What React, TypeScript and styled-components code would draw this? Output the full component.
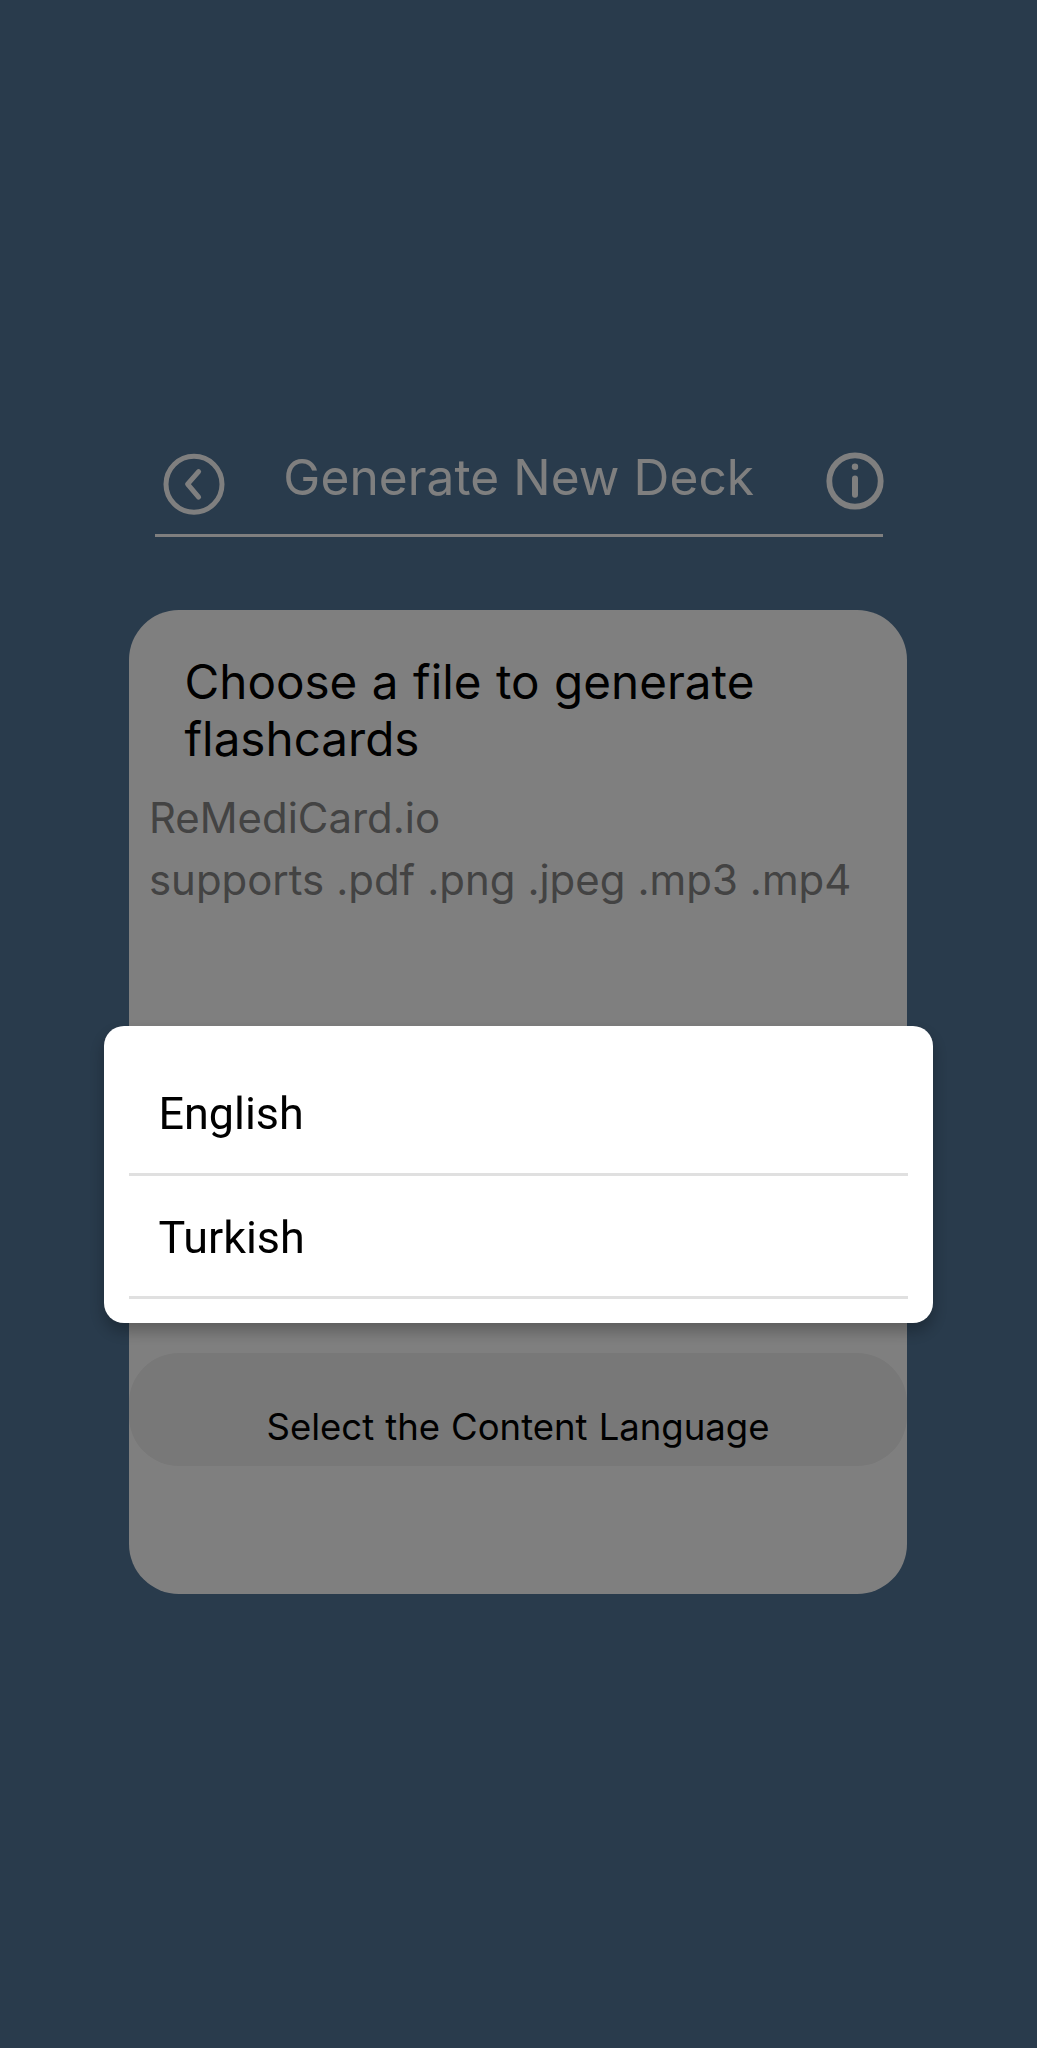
import React from 'react';
import styled, { createGlobalStyle } from 'styled-components';

const GlobalStyle = createGlobalStyle`
  * { box-sizing: border-box; }
  body {
    margin: 0;
    background: #527698;
    font-family: Inter, "Liberation Sans", sans-serif;
  }
  h1, h2, p, ul { margin: 0; padding: 0; font-weight: 400; }
`;

const Screen = styled.main`
  display: flex;
  flex-direction: column;
  width: 1037px;
  height: 2048px;
  padding: 447px 130px 0 129px;
  background: #527698;
  overflow: hidden;
`;

const Header = styled.header`
  display: flex;
  justify-content: space-between;
  align-items: flex-start;
  height: 90px;
  margin: 0 24px 0 26px;
  padding: 0 0 0 7.5px;
  border-bottom: 3px solid #fff;
`;

const Title = styled.h1`
  margin-right: 13px;
  font-size: 49.6px;
  line-height: 60px;
  letter-spacing: 0.08px;
  color: #fff;
`;

const IconButton = styled.button<{ $drop: number; $size: number; $outset?: number }>`
  display: flex;
  width: ${(p) => p.$size}px;
  height: ${(p) => p.$size}px;
  margin-top: ${(p) => p.$drop}px;
  margin-right: ${(p) => -(p.$outset ?? 0)}px;
  padding: 0;
  border: 0;
  background: none;
  color: #fff;

  svg {
    width: 100%;
    height: 100%;
  }
`;

const Card = styled.section`
  display: flex;
  flex-direction: column;
  height: 984px;
  margin-top: 73px;
  padding-top: 42.5px;
  border-radius: 50px;
  background: #fff;
`;

const CardTitle = styled.h2`
  padding: 0 54px 0 55.5px;
  font-size: 47.6px;
  line-height: 57px;
  word-spacing: 1.1px;
  color: #000;
`;

const Formats = styled.p`
  margin-top: 20.5px;
  padding-left: 20px;
  font-size: 41.9px;
  line-height: 62px;
  word-spacing: 0.3px;
  white-space: nowrap;
  color: #868686;
`;

const LanguageButton = styled.button`
  height: 113px;
  margin-top: 442px;
  padding: 52px 0 17px;
  border: 0;
  border-radius: 50px;
  background: #f0f0f0;
  font-family: inherit;
  font-size: 36.5px;
  line-height: 44px;
  word-spacing: 0.8px;
  color: #000;
`;

const Backdrop = styled.div`
  position: fixed;
  inset: 0;
  display: flex;
  justify-content: center;
  align-items: flex-start;
  padding-top: 1026px;
  background: rgba(0, 0, 0, 0.5);
`;

const Menu = styled.ul`
  width: 829px;
  height: 297px;
  padding: 26px 25px 0;
  border-radius: 20px;
  background: #fff;
  box-shadow: 0 8px 16px rgba(0, 0, 0, 0.28);
  list-style: none;
`;

const MenuItem = styled.li`
  padding: 35px 30px 33px 29.5px;
  border-bottom: 3px solid #e0e0e0;
  font-family: Roboto, sans-serif;
  font-size: 44.9px;
  line-height: 53px;
  color: #000;

  &:last-child {
    padding-bottom: 32px;
  }
`;

const BackIcon = () => (
  <svg viewBox="0 0 62 62" fill="none" stroke="currentColor">
    <circle cx="31" cy="31.2" r="28" strokeWidth="5" />
    <path d="M35.6 18.6 24.6 31.2l11 13" strokeWidth="5" strokeLinecap="round" strokeLinejoin="round" />
  </svg>
);

const InfoIcon = () => (
  <svg viewBox="0 0 58 58" fill="none" stroke="currentColor">
    <circle cx="29" cy="29" r="25.7" strokeWidth="5.8" />
    <circle cx="29" cy="14.8" r="3.2" fill="currentColor" stroke="none" />
    <path d="M29 26.4v16.4" strokeWidth="6" strokeLinecap="round" />
  </svg>
);

const languages = ['English', 'Turkish'];

export default function App() {
  return (
    <>
      <GlobalStyle />
      <Screen>
        <Header>
          <IconButton $size={62} $drop={6} aria-label="Back">
            <BackIcon />
          </IconButton>
          <Title>Generate New Deck</Title>
          <IconButton $size={58} $drop={5} $outset={1} aria-label="Info">
            <InfoIcon />
          </IconButton>
        </Header>
        <Card>
          <CardTitle>Choose a file to generate flashcards</CardTitle>
          <Formats>
            ReMediCard.io
            <br />
            supports .pdf .png .jpeg .mp3 .mp4
          </Formats>
          <LanguageButton>Select the Content Language</LanguageButton>
        </Card>
      </Screen>
      <Backdrop>
        <Menu>
          {languages.map((name) => (
            <MenuItem key={name}>{name}</MenuItem>
          ))}
        </Menu>
      </Backdrop>
    </>
  );
}
